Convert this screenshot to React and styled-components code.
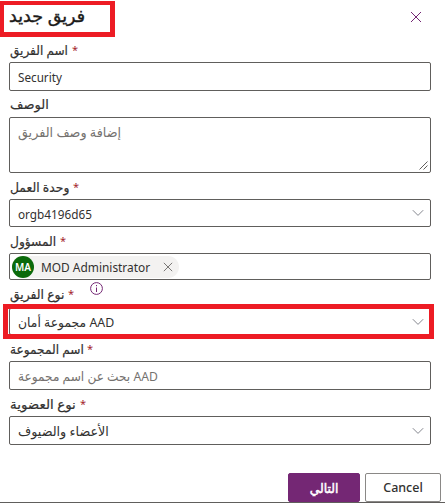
import React from "react";
import styled, { createGlobalStyle } from "styled-components";

const GlobalStyle = createGlobalStyle`
  * { box-sizing: border-box; }
  html, body { margin: 0; background: #fff; overflow: hidden; }
  body { font-family: "Noto Sans", "DejaVu Sans", sans-serif; font-size: 13px; color: #323130; }
`;

const Panel = styled.main`
  display: flex;
  flex-direction: column;
  width: 445px;
  height: 503px;
  background: #fff;
  overflow: hidden;
`;

const Header = styled.header`
  display: flex;
  justify-content: space-between;
  height: 37px;
  padding-top: 1px;
`;

const TitleBox = styled.div`
  width: 115px;
  height: 36px;
  padding: 1px 0 0 5px;
  border: solid #ed1c24;
  border-width: 4px 5px 5px 4px;
`;

const Title = styled.h1`
  margin: 0;
  font-size: 17px;
  font-weight: 500;
  line-height: 20px;
  color: #1b1a19;
  -webkit-text-stroke: 0.4px #1b1a19;
  white-space: nowrap;
`;

const CloseButton = styled.button`
  display: flex;
  width: 12px;
  height: 12px;
  margin: 10px 23px 0 0;
  padding: 0;
  border: 0;
  background: none;
`;

const Field = styled.section`
  position: relative;
  width: 422px;
  margin-left: 9px;
`;

const Label = styled.label`
  display: flex;
  align-items: flex-end;
  height: ${(p) => p.$height || 26}px;
  padding: 0 0 ${(p) => p.$gap || 3}px 1px;
  line-height: 18px;
  font-weight: 500;
  -webkit-text-stroke: 0.2px currentColor;
  white-space: nowrap;
`;

const Star = styled.span`
  margin-left: 5px;
  color: #a4262c;
  font-size: 11px;
  font-weight: 400;
  -webkit-text-stroke: 0;
`;

const InfoIcon = styled.svg`
  position: absolute;
  left: 81px;
  top: 2px;
`;

const Control = styled.div`
  display: flex;
  align-items: ${(p) => (p.$tall ? "flex-start" : "center")};
  justify-content: space-between;
  height: ${(p) => p.$height}px;
  padding: ${(p) => (p.$tall ? "5px 2px 2px 8px" : p.$people ? "0 2px" : "0 6px 0 8px")};
  border: 1px solid #605e5c;
  border-radius: 2px;
  color: ${(p) => (p.$placeholder ? "#75726f" : "#323130")};
`;

const Fit = styled.span`
  display: inline-block;
  transform: scaleX(${(p) => p.$x || 1});
  transform-origin: ${(p) => p.$origin || "left"} center;
  padding-top: ${(p) => p.$drop || 0}px;
  line-height: 18px;
  white-space: nowrap;
`;

const FitSlot = styled.span`
  flex: none;
  width: ${(p) => p.$width}px;
`;

const Grip = styled.svg`
  align-self: flex-end;
`;

const Highlight = styled.div`
  position: absolute;
  left: -6px;
  bottom: -4px;
  width: 431px;
  height: 35px;
  border: 5px solid #ed1c24;
`;

const Persona = styled.div`
  display: flex;
  align-items: center;
  width: 167px;
  height: 22px;
  border-radius: 11px;
  background: #f3f2f1;
`;

const Avatar = styled.span`
  flex: none;
  width: 22px;
  height: 22px;
  border-radius: 50%;
  background: #0b6a0b;
  color: #fff;
  font: 600 10px/22px "Noto Sans", sans-serif;
  text-align: center;
`;

const PersonaName = styled.span`
  flex: none;
  width: 129px;
  padding-left: 7px;
  white-space: nowrap;
`;

const Footer = styled.footer`
  display: flex;
  justify-content: flex-end;
  gap: 5px;
  height: 30px;
  margin-top: 28px;
  padding-right: 4px;
  border-bottom: 1px solid #605e5c;
`;

const Button = styled.button`
  width: ${(p) => (p.$primary ? 72 : 76)}px;
  height: 29px;
  padding: 0;
  border: 1px solid ${(p) => (p.$primary ? "#742774" : "#8a8886")};
  border-radius: 2px;
  background: ${(p) => (p.$primary ? "#742774" : "#fff")};
  color: ${(p) => (p.$primary ? "#fff" : "#323130")};
  font-family: inherit;
  font-size: ${(p) => (p.$primary ? 13 : 12.5)}px;
  font-weight: 500;
  -webkit-text-stroke: ${(p) => (p.$primary ? "0.5px #fff" : "0")};
`;

const Cross = ({ size, color }) => (
  <svg width={size} height={size} viewBox="0 0 12 12" fill="none" stroke={color}>
    <path d="M1 1 11 11M11 1 1 11" />
  </svg>
);

const Chevron = () => (
  <svg width="12" height="8" viewBox="0 0 12 8" fill="none" stroke="#85878f">
    <path d="M.8 1.2 6 6.4l5.2-5.2" />
  </svg>
);

const FieldLabel = ({ text, x, required, height, width, gap }) => (
  <Label $height={height} $gap={gap}>
    <FitSlot $width={width}><Fit $x={x}>{text}</Fit></FitSlot>
    {required && <Star>*</Star>}
  </Label>
);

export default function App() {
  return (
    <>
      <GlobalStyle />
      <Panel>
        <Header>
          <TitleBox><Title><Fit $x={1.03}>فريق جديد</Fit></Title></TitleBox>
          <CloseButton aria-label="Close"><Cross size={12} color="#742774" /></CloseButton>
        </Header>
        <Field>
          <FieldLabel text="اسم الفريق" x={0.93} width={57} height={25} required />
          <Control $height={29}><Fit $x={0.9} $drop={1}>Security</Fit></Control>
        </Field>
        <Field>
          <FieldLabel text="الوصف" width={38} gap={4} />
          <Control $height={56} $tall $placeholder>
            <Fit $x={0.98}>إضافة وصف الفريق</Fit>
            <Grip width="9" height="9" viewBox="0 0 9 9" stroke="#605e5c" fill="none">
              <path d="M.5 8.5l8-8M4.5 8.5l4-4" />
            </Grip>
          </Control>
        </Field>
        <Field>
          <FieldLabel text="وحدة العمل" x={0.95} width={58} required />
          <Control $height={28}><Fit $x={0.905} $drop={2}>orgb4196d65</Fit><Chevron /></Control>
        </Field>
        <Field>
          <FieldLabel text="المسؤول" x={0.94} width={45} required />
          <Control $height={27} $people>
            <Persona>
              <Avatar>MA</Avatar>
              <PersonaName><Fit $x={0.915}>MOD Administrator</Fit></PersonaName>
              <Cross size={10} color="#605e5c" />
            </Persona>
          </Control>
        </Field>
        <Field>
          <FieldLabel text="نوع الفريق" x={0.95} width={53} height={28} gap={5} required />
          <InfoIcon width="13" height="13" viewBox="0 0 13 13" fill="none" stroke="#742774">
            <circle cx="6.5" cy="6.5" r="5.9" />
            <path d="M6.5 5.5v4.5M6.5 3v1.2" />
          </InfoIcon>
          <Control $height={27}><Fit $x={0.95}>مجموعة أمان AAD</Fit><Chevron /></Control>
          <Highlight />
        </Field>
        <Field>
          <FieldLabel text="اسم المجموعة" x={0.935} width={72} required />
          <Control $height={29} $placeholder><Fit $x={0.935}>بحث عن اسم مجموعة AAD</Fit></Control>
        </Field>
        <Field>
          <FieldLabel text="نوع العضوية" x={1.03} width={65} required />
          <Control $height={29}><Fit $x={0.98}>الأعضاء والضيوف</Fit><Chevron /></Control>
        </Field>
        <Footer>
          <Button $primary><Fit $x={0.95} $origin="center">التالي</Fit></Button>
          <Button>Cancel</Button>
        </Footer>
      </Panel>
    </>
  );
}
